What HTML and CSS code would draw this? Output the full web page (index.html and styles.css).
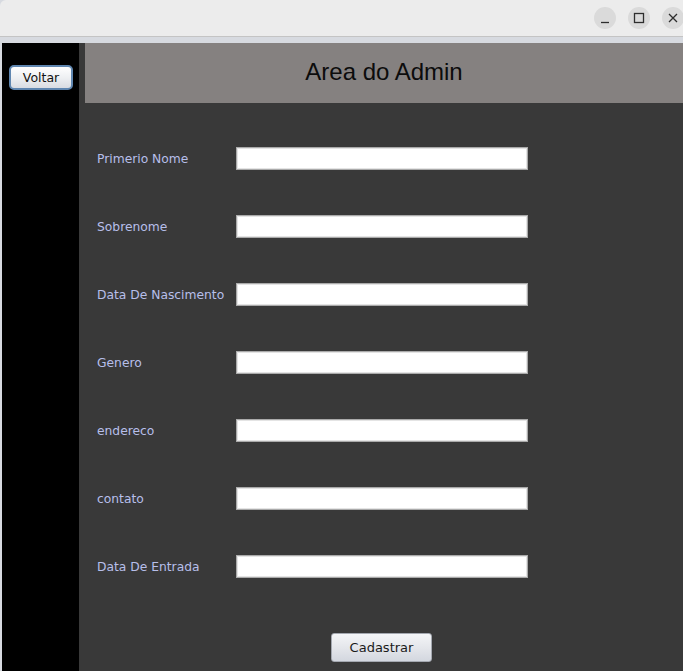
FILE: index.html
```html
<!DOCTYPE html>
<html>
<head>
<meta charset="utf-8">
<link rel="stylesheet" href="styles.css">
</head>
<body>
<div class="window">
  <div class="titlebar">
    <div class="controls">
      <span class="ctl"><svg width="22" height="22" viewBox="0 0 22 22"><path d="M7 15.5h8" stroke="#2e2e2e" stroke-width="1.3"/></svg></span>
      <span class="ctl"><svg width="22" height="22" viewBox="0 0 22 22"><rect x="6.5" y="6.5" width="9" height="9" fill="none" stroke="#2e2e2e" stroke-width="1.3"/></svg></span>
      <span class="ctl"><svg width="22" height="22" viewBox="0 0 22 22"><path d="M7 7l8 8M15 7l-8 8" stroke="#2e2e2e" stroke-width="1.3"/></svg></span>
    </div>
  </div>
  <div class="strip"></div>
  <div class="main">
    <div class="edge"></div>
    <div class="sidebar">
      <button class="btn-back">Voltar</button>
    </div>
    <div class="content">
      <div class="header"><h1 class="title">Area do Admin</h1></div>
      <div class="form">
        <div class="row"><label class="lbl">Primerio Nome</label><input class="field" type="text"></div>
        <div class="row"><label class="lbl">Sobrenome</label><input class="field" type="text"></div>
        <div class="row"><label class="lbl">Data De Nascimento</label><input class="field" type="text"></div>
        <div class="row"><label class="lbl">Genero</label><input class="field" type="text"></div>
        <div class="row"><label class="lbl">endereco</label><input class="field" type="text"></div>
        <div class="row"><label class="lbl">contato</label><input class="field" type="text"></div>
        <div class="row"><label class="lbl">Data De Entrada</label><input class="field" type="text"></div>
      </div>
      <div class="actions"><button class="btn-submit">Cadastrar</button></div>
    </div>
  </div>
</div>
</body>
</html>
```

FILE: styles.css
```css
html, body {
  margin: 0;
  padding: 0;
  width: 683px;
  height: 671px;
  overflow: hidden;
  background: #d7dae0;
}
.window {
  width: 683px;
  height: 671px;
  display: flex;
  flex-direction: column;
}
.titlebar {
  height: 36px;
  background: #ececec;
  border-bottom: 1px solid #c4c4c4;
  border-top-left-radius: 6px;
  display: flex;
  justify-content: flex-end;
  align-items: flex-start;
}
.controls {
  display: flex;
  gap: 12px;
  padding-top: 7px;
  margin-right: -1px;
}
.ctl {
  width: 22px;
  height: 22px;
  border-radius: 50%;
  background: #dadada;
  display: block;
}
.ctl svg { display: block; }
.strip {
  height: 6px;
  background: #d7dae0;
}
.main {
  flex: 1;
  display: flex;
  min-height: 0;
}
.edge {
  width: 2px;
  background: #d7dae0;
}
.sidebar {
  width: 77px;
  background: #000;
  padding: 22px 0 0 7px;
  box-sizing: border-box;
}
.btn-back {
  width: 64px;
  height: 25px;
  box-sizing: border-box;
  border: 2px solid #5f86b0;
  border-radius: 5px;
  background: linear-gradient(#ffffff, #eceef1 55%, #d9dce2);
  font-family: "DejaVu Sans", sans-serif;
  font-size: 12.5px;
  color: #111;
  padding: 0;
  margin: 0;
}
.content {
  flex: 1;
  background: #393939;
  display: flex;
  flex-direction: column;
}
.header {
  margin-left: 6px;
  height: 60px;
  background: #858180;
  display: flex;
  align-items: center;
  justify-content: center;
}
.title {
  margin: 0;
  font-family: "Liberation Sans", Arial, sans-serif;
  font-weight: normal;
  font-size: 24px;
  color: #0c0c0c;
  position: relative;
  top: -1px;
}
.form {
  display: flex;
  flex-direction: column;
  gap: 46px;
  padding: 44px 0 0 18px;
}
.row {
  display: flex;
  align-items: center;
  height: 22px;
}
.lbl {
  width: 139px;
  font-family: "DejaVu Sans", sans-serif;
  font-size: 12.3px;
  color: #b7bfea;
  white-space: nowrap;
  position: relative;
  top: 1px;
}
.field {
  width: 292px;
  height: 23px;
  box-sizing: border-box;
  margin: 0;
  border: 1px solid #aaaaaa;
  box-shadow: inset 0 0 0 1px #e4e4e4;
  background: #fff;
  padding: 0;
}
.actions {
  display: flex;
  justify-content: center;
  padding: 56px 0 0 1px;
}
.btn-submit {
  width: 101px;
  height: 29px;
  box-sizing: border-box;
  border: 1px solid #a4a8b0;
  border-radius: 3px;
  background: linear-gradient(#f4f5f7, #e3e5ea 55%, #d3d7df);
  font-family: "DejaVu Sans", sans-serif;
  font-size: 13px;
  color: #1a1a1a;
  padding: 0;
  margin: 0;
}
```
